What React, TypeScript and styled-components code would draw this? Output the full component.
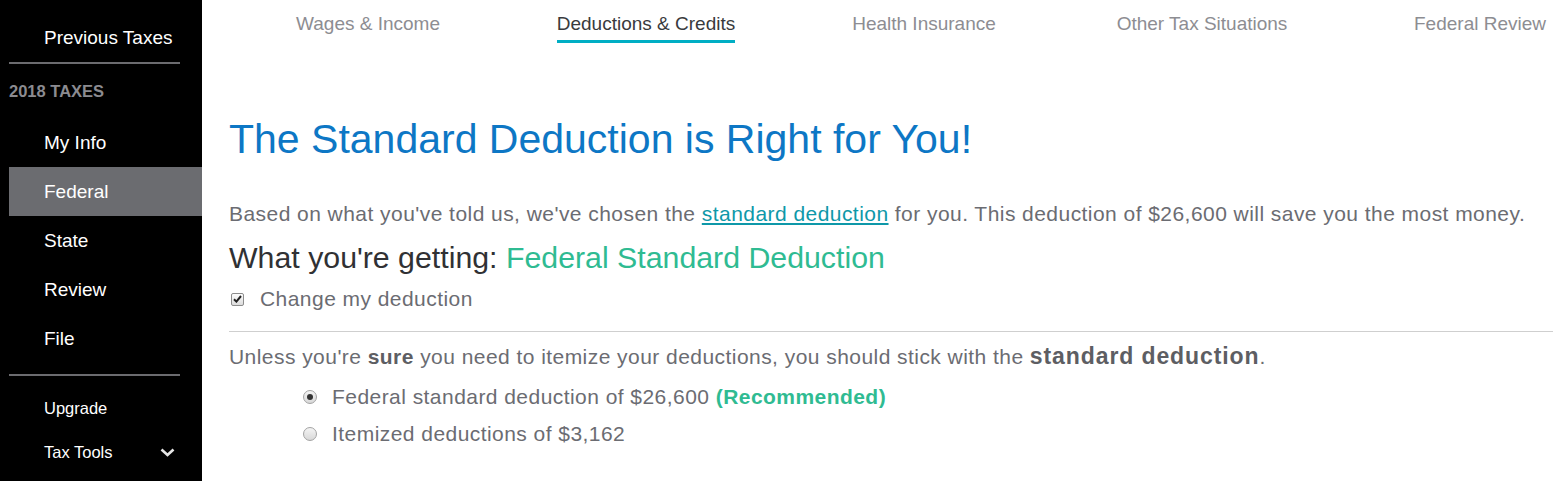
import * as React from 'react';
import styled, { createGlobalStyle } from 'styled-components';

const GlobalStyle = createGlobalStyle`
  html, body {
    margin: 0;
    padding: 0;
    overflow: hidden;
    background: #fff;
    font-family: 'Liberation Sans', Arial, sans-serif;
  }
`;

const Page = styled.div`
  display: flex;
  width: 1553px;
  height: 481px;
  overflow: hidden;
`;

const Sidebar = styled.nav`
  flex: 0 0 202px;
  background: #000;
  padding-top: 13px;
  display: flex;
  flex-direction: column;
`;

const NavItem = styled.div<{ active?: boolean; small?: boolean }>`
  display: flex;
  align-items: center;
  justify-content: space-between;
  height: ${p => (p.small ? '44px' : '49px')};
  margin-left: 9px;
  padding-left: 35px;
  padding-right: 27px;
  color: #fff;
  font-size: ${p => (p.small ? '16.5px' : '19px')};
  background: ${p => (p.active ? '#6b6c70' : 'transparent')};
`;

const NavRule = styled.hr<{ gap?: number }>`
  margin: ${p => p.gap || 0}px 0 0 9px;
  width: 171px;
  height: 2px;
  border: 0;
  background: #6b6b6f;
`;

const SectionLabel = styled.div`
  height: 54px;
  display: flex;
  align-items: center;
  padding-left: 9px;
  color: #8b8b90;
  font-size: 16.5px;
  font-weight: bold;
`;

const Main = styled.main`
  flex: 1;
  min-width: 0;
  padding-left: 27px;
  display: flex;
  flex-direction: column;
`;

const Tabs = styled.div`
  display: grid;
  grid-template-columns: repeat(5, 278px);
  flex-shrink: 0;
`;

const Tab = styled.div`
  display: flex;
  justify-content: center;
  padding-top: 13px;
`;

const TabLabel = styled.span<{ active?: boolean }>`
  font-size: 19px;
  line-height: 21px;
  padding-bottom: 6px;
  white-space: nowrap;
  color: ${p => (p.active ? '#393a3d' : '#8d8d92')};
  border-bottom: 3px solid ${p => (p.active ? '#00aec4' : 'transparent')};
`;

const Title = styled.h1`
  margin: 72px 0 0;
  font-size: 41px;
  line-height: 48px;
  font-weight: normal;
  color: #0d77c5;
  white-space: nowrap;
`;

const Text = styled.p<{ top: number }>`
  margin: ${p => p.top}px 0 0;
  font-size: 21px;
  line-height: 26px;
  letter-spacing: 0.45px;
  color: #6b6c72;
  white-space: nowrap;

  b {
    color: #5d5e63;
  }
`;

const Emphasis = styled.b`
  font-size: 23px;
  line-height: 20px;
  letter-spacing: 0.9px;
`;

const Link = styled.a`
  color: #0e98a9;
  text-decoration: underline;
`;

const Getting = styled.h2`
  margin: 13px 0 0;
  font-size: 30.3px;
  line-height: 36px;
  font-weight: normal;
  color: #303134;
  white-space: nowrap;
`;

const Green = styled.span<{ bold?: boolean }>`
  color: #2fbb92;
  font-weight: ${p => (p.bold ? 'bold' : 'normal')};
`;

const CheckRow = styled.label`
  display: flex;
  align-items: center;
  margin-top: 10px;
  height: 26px;
  padding-left: 2px;
  font-size: 21px;
  letter-spacing: 0.45px;
  color: #6b6c72;
`;

const Box = styled.span`
  width: 11px;
  height: 11px;
  border: 1px solid #8c8c8c;
  border-radius: 2px;
  background: linear-gradient(#fdfdfd, #dcdcdc);
  margin-right: 16px;
  display: flex;
  align-items: center;
  justify-content: center;
`;

const Divider = styled.hr`
  margin: 19px 0 0;
  border: 0;
  height: 1px;
  background: #cfcfcf;
`;

const Options = styled.div`
  display: flex;
  flex-direction: column;
  gap: 11px;
  margin-top: 14px;
  padding-left: 74px;
`;

const Option = styled.label`
  display: flex;
  align-items: center;
  height: 26px;
  font-size: 21px;
  letter-spacing: 0.45px;
  color: #6b6c72;
  white-space: nowrap;
`;

const Radio = styled.span<{ checked?: boolean }>`
  position: relative;
  width: 12px;
  height: 12px;
  border: 1px solid #a3a3a3;
  border-radius: 50%;
  background: linear-gradient(#f4f4f4, #d8d8d8);
  margin-right: 15px;

  &::after {
    content: '';
    display: ${p => (p.checked ? 'block' : 'none')};
    position: absolute;
    left: 3px;
    top: 3px;
    width: 6px;
    height: 6px;
    border-radius: 50%;
    background: #333;
  }
`;

const tabs = ['Wages & Income', 'Deductions & Credits', 'Health Insurance', 'Other Tax Situations', 'Federal Review'];
const nav = ['My Info', 'Federal', 'State', 'Review', 'File'];

export default function App() {
  return (
    <Page>
      <GlobalStyle />
      <Sidebar>
        <NavItem>Previous Taxes</NavItem>
        <NavRule />
        <SectionLabel>2018 TAXES</SectionLabel>
        {nav.map(n => (
          <NavItem key={n} active={n === 'Federal'}>{n}</NavItem>
        ))}
        <NavRule gap={11} />
        <NavItem small style={{ marginTop: 10 }}>Upgrade</NavItem>
        <NavItem small>
          Tax Tools
          <svg width="15" height="9" viewBox="0 0 15 9">
            <polyline points="1.5,1.5 7.5,7 13.5,1.5" fill="none" stroke="#e6e6e6" strokeWidth="2.6" />
          </svg>
        </NavItem>
      </Sidebar>
      <Main>
        <Tabs>
          {tabs.map(t => (
            <Tab key={t}>
              <TabLabel active={t === 'Deductions & Credits'}>{t}</TabLabel>
            </Tab>
          ))}
        </Tabs>
        <Title>The Standard Deduction is Right for You!</Title>
        <Text top={38}>
          Based on what you've told us, we've chosen the <Link>standard deduction</Link> for you. This deduction of $26,600 will save you the most money.
        </Text>
        <Getting>
          What you're getting: <Green>Federal Standard Deduction</Green>
        </Getting>
        <CheckRow>
          <Box>
            <svg width="9" height="8" viewBox="0 0 9 8">
              <path d="M1 4.2 L3.4 6.6 L8 1" fill="none" stroke="#222" strokeWidth="2" />
            </svg>
          </Box>
          Change my deduction
        </CheckRow>
        <Divider />
        <Text top={12}>
          Unless you're <b>sure</b> you need to itemize your deductions, you should stick with the <Emphasis>standard deduction</Emphasis>.
        </Text>
        <Options>
          <Option>
            <Radio checked />
            Federal standard deduction of $26,600&nbsp;<Green bold>(Recommended)</Green>
          </Option>
          <Option>
            <Radio />
            Itemized deductions of $3,162
          </Option>
        </Options>
      </Main>
    </Page>
  );
}
